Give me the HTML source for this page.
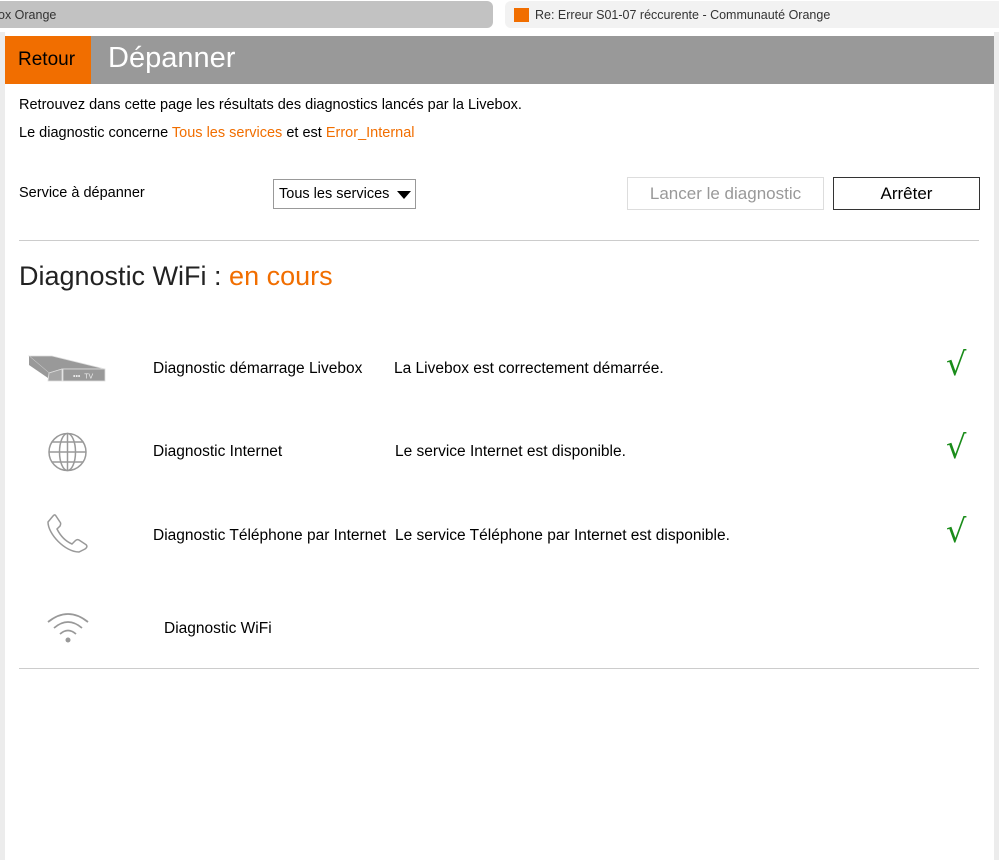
<!DOCTYPE html>
<html><head><meta charset="utf-8"><style>
*{margin:0;padding:0;box-sizing:border-box}
body{width:999px;height:860px;background:#fff;font-family:"Liberation Sans",Arial,sans-serif;position:relative;overflow:hidden;color:#000}
.a{position:absolute;white-space:nowrap}
.tabbar{position:absolute;left:0;top:0;width:999px;height:32px;background:#fff}
.t1{position:absolute;left:-10px;top:1px;width:503px;height:27px;background:#c2c2c2;border-radius:6px;font-size:12.5px;color:#333;padding:7px 0 0 8px}
.t2{position:absolute;left:505px;top:1px;width:500px;height:27px;background:#f2f2f2;border-radius:6px;font-size:12.5px;color:#333;padding:7px 0 0 30px}
.ic{position:absolute;left:9px;top:7px;width:15px;height:14px;background:#f16e00}
.side{position:absolute;top:32px;width:5px;height:828px;background:#ececec}
.hdr{position:absolute;left:5px;top:36px;width:989px;height:48px;background:#999}
.ret{position:absolute;left:0;top:0;width:86px;height:48px;background:#f16e00;color:#000;font-size:19px;padding:13px 0 0 13px}
.tit{position:absolute;left:103px;top:6px;color:#fff;font-size:29px}
.o{color:#f16e00}
.hr{position:absolute;left:19px;width:960px;height:1px;background:#ccc}
.row{font-size:15.5px}
.chk{position:absolute;color:#1a8c1a;font-size:32px;font-family:"DejaVu Sans",sans-serif}
</style></head><body>
<div class="tabbar"><div class="t1">ox Orange</div><div class="t2"><div class="ic"></div>Re: Erreur S01-07 réccurente - Communauté Orange</div></div>
<div class="side" style="left:0"></div><div class="side" style="left:994px"></div>
<div class="hdr"><div class="ret">Retour</div><div class="tit">Dépanner</div></div>
<div class="a" style="left:19px;top:97px;font-size:14.5px">Retrouvez dans cette page les résultats des diagnostics lancés par la Livebox.</div>
<div class="a" style="left:19px;top:125px;font-size:14.5px">Le diagnostic concerne <span class="o">Tous les services</span> et est <span class="o">Error_Internal</span></div>
<div class="a" style="left:19px;top:185px;font-size:14.5px">Service à dépanner</div>
<div class="a" style="left:273px;top:179px;width:143px;height:30px;border:1px solid #999;font-size:14.5px;padding:6px 0 0 5px">Tous les services<span style="position:absolute;right:4px;top:11px;width:0;height:0;border-left:7px solid transparent;border-right:7px solid transparent;border-top:8px solid #000"></span></div>
<div class="a" style="left:627px;top:177px;width:197px;height:33px;border:1px solid #ddd;font-size:17px;color:#999;text-align:center;padding-top:6px">Lancer le diagnostic</div>
<div class="a" style="left:833px;top:177px;width:147px;height:33px;border:1px solid #333;font-size:17px;text-align:center;padding-top:6px">Arrêter</div>
<div class="hr" style="top:240px"></div>
<div class="a" style="left:19px;top:261px;font-size:27px;color:#222">Diagnostic WiFi : <span class="o">en cours</span></div>
<svg class="a" style="left:28px;top:354px" width="78" height="30" viewBox="0 0 78 30"><polygon points="1,2 24,2 77,15 34,15 21,19" fill="#999" stroke="#ddd" stroke-width="0.8"/><polygon points="1,2 1,11 20,24 21,19" fill="#999"/><polygon points="21,19 34,15 34,27 20,27" fill="#a5a5a5" stroke="#ddd" stroke-width="0.8"/><rect x="35" y="15" width="42" height="12" fill="#999" stroke="#ddd" stroke-width="0.8"/><text x="45" y="24.5" font-size="7" fill="#eee" font-family="Liberation Sans">••• &#160;TV</text></svg>
<svg class="a" style="left:47px;top:432px" width="41" height="40" viewBox="0 0 41 40" fill="none" stroke="#999" stroke-width="1.5"><circle cx="20.5" cy="20" r="18.5"/><ellipse cx="20.5" cy="20" rx="8" ry="18.5"/><line x1="20.5" y1="1.5" x2="20.5" y2="38.5"/><line x1="2" y1="20" x2="39" y2="20"/><line x1="5" y1="10" x2="36" y2="10"/><line x1="5" y1="30" x2="36" y2="30"/></svg>
<svg class="a" style="left:47px;top:514px" width="42" height="42" viewBox="0 0 42 42" fill="none" stroke="#999" stroke-width="1.5"><path d="M6 2 L1 8 C1 20 18 38 32 38 L38 35 C41 33 40 31 38 30 L32 26 C30 25 29 26 27 28 L25 30 C18 27 13 21 10 15 L13 12 C14 10 14 9 13 8 L9 2 C8 0 7 1 6 2 Z"/></svg>
<svg class="a" style="left:46px;top:610px" width="44" height="34" viewBox="0 0 44 34" fill="none" stroke="#999" stroke-width="1.8"><path d="M2 12 Q22 -4 42 12"/><path d="M8 18 Q22 6 36 18"/><path d="M14 24 Q22 17 30 24"/><circle cx="22" cy="30" r="2.5" fill="#999" stroke="none"/></svg>
<div class="a row" style="left:153px;top:360px">Diagnostic démarrage Livebox</div>
<div class="a row" style="left:394px;top:360px">La Livebox est correctement démarrée.</div>
<div class="chk" style="left:946px;top:345px">√</div>
<div class="a row" style="left:153px;top:443px">Diagnostic Internet</div>
<div class="a row" style="left:395px;top:443px">Le service Internet est disponible.</div>
<div class="chk" style="left:946px;top:428px">√</div>
<div class="a row" style="left:153px;top:527px">Diagnostic Téléphone par Internet</div>
<div class="a row" style="left:395px;top:527px">Le service Téléphone par Internet est disponible.</div>
<div class="chk" style="left:946px;top:512px">√</div>
<div class="a row" style="left:164px;top:620px">Diagnostic WiFi</div>
<div class="hr" style="top:668px"></div>
</body></html>
